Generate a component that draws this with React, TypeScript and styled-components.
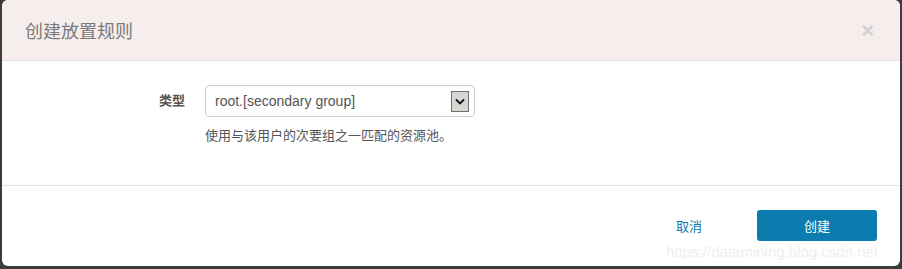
import styled, { createGlobalStyle } from "styled-components"

const GlobalStyle = createGlobalStyle`
  html, body {
    margin: 0;
    padding: 0;
    background: #3d3d3d;
    height: 269px;
    overflow: hidden;
  }
  body {
    font-family: "Liberation Sans", "Noto Sans CJK SC", sans-serif;
  }
`

const Modal = styled.div`
  position: relative;
  box-sizing: border-box;
  margin-left: 2px;
  width: 898px;
  height: 266px;
  background: #fff;
  border-radius: 6px;
  overflow: hidden;
  display: flex;
  flex-direction: column;
`

const Header = styled.div`
  box-sizing: border-box;
  height: 61px;
  background: #f6eded;
  border-bottom: 1px solid #e3e3e3;
  display: flex;
  align-items: center;
  justify-content: space-between;
  padding: 0 26px 0 23px;
`

const Title = styled.h3`
  margin: 0;
  font-size: 18px;
  font-weight: normal;
  color: #7a7a7a;
`

const Close = styled.span`
  font-size: 22px;
  font-weight: bold;
  color: #d0d0d0;
  line-height: 1;
  margin-top: 2px;
`

const Body = styled.div`
  box-sizing: border-box;
  height: 125px;
  border-bottom: 1px solid #e3e3e3;
  padding-top: 24px;
`

const FormRow = styled.div`
  display: grid;
  grid-template-columns: 183px 270px;
  column-gap: 20px;
  align-items: start;
`

const Label = styled.label`
  text-align: right;
  font-size: 13px;
  font-weight: bold;
  color: #555;
  line-height: 32px;
`

const Field = styled.div`
  display: flex;
  flex-direction: column;
`

const Select = styled.div`
  box-sizing: border-box;
  height: 32px;
  border: 1px solid #cfcfcf;
  border-radius: 4px;
  display: flex;
  align-items: center;
  justify-content: space-between;
  padding: 0 5px 0 9px;
  font-size: 14px;
  color: #555;
`

const Arrow = styled.span`
  box-sizing: border-box;
  width: 18px;
  height: 21px;
  background: #d8d6d2;
  border: 1px solid #6f6f6f;
  display: flex;
  align-items: center;
  justify-content: center;
`

const Help = styled.p`
  margin: 8px 0 0;
  font-size: 13px;
  color: #555;
`

const Footer = styled.div`
  flex: 1;
  display: flex;
  align-items: flex-start;
  justify-content: flex-end;
  gap: 55px;
  padding: 24px 23px 0 0;
`

const LinkButton = styled.button`
  border: none;
  background: none;
  padding: 0;
  height: 31px;
  font-family: inherit;
  font-size: 13px;
  color: #0b7aa9;
`

const PrimaryButton = styled.button`
  width: 120px;
  height: 31px;
  border: none;
  border-radius: 3px;
  background: #0b7cad;
  color: #fff;
  font-family: inherit;
  font-size: 13px;
`

const Watermark = styled.span`
  position: absolute;
  right: 22px;
  bottom: 6px;
  font-size: 15px;
  color: #efefef;
  pointer-events: none;
`

export default function App() {
  return (
    <>
      <GlobalStyle />
      <Modal>
        <Header>
          <Title>创建放置规则</Title>
          <Close>×</Close>
        </Header>
        <Body>
          <FormRow>
            <Label>类型</Label>
            <Field>
              <Select>
                <span>root.[secondary group]</span>
                <Arrow>
                  <svg width="10" height="7" viewBox="0 0 10 7">
                    <path d="M1 1.5 L5 5.5 L9 1.5" fill="none" stroke="#111" strokeWidth="1.8" />
                  </svg>
                </Arrow>
              </Select>
              <Help>使用与该用户的次要组之一匹配的资源池。</Help>
            </Field>
          </FormRow>
        </Body>
        <Footer>
          <LinkButton>取消</LinkButton>
          <PrimaryButton>创建</PrimaryButton>
        </Footer>
        <Watermark>https://datamining.blog.csdn.net</Watermark>
      </Modal>
    </>
  )
}
